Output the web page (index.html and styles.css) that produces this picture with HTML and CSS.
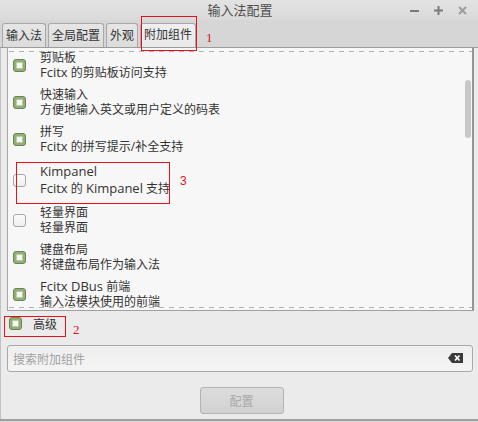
FILE: index.html
```html
<!DOCTYPE html>
<html lang="zh-CN">
<head>
<meta charset="utf-8">
<title>输入法配置</title>
<link rel="stylesheet" href="styles.css">
</head>
<body>
<div class="window">
  <header class="titlebar">
    <span class="title">输入法配置</span>
    <div class="controls">
      <svg class="ctl" width="9" height="9" viewBox="0 0 9 9"><rect x="0" y="4" width="9" height="2" fill="#7a7a7a"/></svg>
      <svg class="ctl" width="9" height="9" viewBox="0 0 9 9"><rect x="0" y="3.5" width="9" height="2" fill="#7a7a7a"/><rect x="3.5" y="0" width="2" height="9" fill="#7a7a7a"/></svg>
      <svg class="ctl" width="9" height="9" viewBox="0 0 9 9"><path d="M1 1 L8 8 M8 1 L1 8" stroke="#9c9c9c" stroke-width="2"/></svg>
    </div>
  </header>

  <nav class="tabs">
    <div class="tab">输入法</div>
    <div class="tab">全局配置</div>
    <div class="tab">外观</div>
    <div class="tab active">附加组件</div>
  </nav>

  <main class="page">
    <div class="list">
      <div class="items">
        <div class="item">
          <span class="cb on"><svg width="13" height="13" viewBox="0 0 13 13"><rect x="0.5" y="0.5" width="12" height="12" rx="2.5" fill="#94ae78" stroke="#6a8454"/><rect x="3.5" y="3.5" width="6" height="6" fill="#dfe8d6"/><path d="M4.3 4.3 L8.7 8.7 M8.7 4.3 L4.3 8.7" stroke="#fff" stroke-width="1.8"/></svg></span>
          <div class="text"><div>剪贴板</div><div><span class="en">Fcitx</span> 的剪贴板访问支持</div></div>
        </div>
        <div class="item">
          <span class="cb on"><svg width="13" height="13" viewBox="0 0 13 13"><rect x="0.5" y="0.5" width="12" height="12" rx="2.5" fill="#94ae78" stroke="#6a8454"/><rect x="3.5" y="3.5" width="6" height="6" fill="#dfe8d6"/><path d="M4.3 4.3 L8.7 8.7 M8.7 4.3 L4.3 8.7" stroke="#fff" stroke-width="1.8"/></svg></span>
          <div class="text"><div>快速输入</div><div>方便地输入英文或用户定义的码表</div></div>
        </div>
        <div class="item">
          <span class="cb on"><svg width="13" height="13" viewBox="0 0 13 13"><rect x="0.5" y="0.5" width="12" height="12" rx="2.5" fill="#94ae78" stroke="#6a8454"/><rect x="3.5" y="3.5" width="6" height="6" fill="#dfe8d6"/><path d="M4.3 4.3 L8.7 8.7 M8.7 4.3 L4.3 8.7" stroke="#fff" stroke-width="1.8"/></svg></span>
          <div class="text"><div>拼写</div><div><span class="en">Fcitx</span> 的拼写提示/补全支持</div></div>
        </div>
        <div class="item tall">
          <span class="cb off"></span>
          <div class="text"><div><span class="en">Kimpanel</span></div><div><span class="en">Fcitx</span> 的 <span class="en">Kimpanel</span> 支持</div></div>
        </div>
        <div class="item">
          <span class="cb off"></span>
          <div class="text"><div>轻量界面</div><div>轻量界面</div></div>
        </div>
        <div class="item">
          <span class="cb on"><svg width="13" height="13" viewBox="0 0 13 13"><rect x="0.5" y="0.5" width="12" height="12" rx="2.5" fill="#94ae78" stroke="#6a8454"/><rect x="3.5" y="3.5" width="6" height="6" fill="#dfe8d6"/><path d="M4.3 4.3 L8.7 8.7 M8.7 4.3 L4.3 8.7" stroke="#fff" stroke-width="1.8"/></svg></span>
          <div class="text"><div>键盘布局</div><div>将键盘布局作为输入法</div></div>
        </div>
        <div class="item">
          <span class="cb on"><svg width="13" height="13" viewBox="0 0 13 13"><rect x="0.5" y="0.5" width="12" height="12" rx="2.5" fill="#94ae78" stroke="#6a8454"/><rect x="3.5" y="3.5" width="6" height="6" fill="#dfe8d6"/><path d="M4.3 4.3 L8.7 8.7 M8.7 4.3 L4.3 8.7" stroke="#fff" stroke-width="1.8"/></svg></span>
          <div class="text"><div><span class="en">Fcitx DBus</span> 前端</div><div>输入法模块使用的前端</div></div>
        </div>
      </div>
      <div class="scrollbar"></div>
    </div>

    <div class="advanced">
      <span class="cb on"><svg width="13" height="13" viewBox="0 0 13 13"><rect x="0.5" y="0.5" width="12" height="12" rx="2.5" fill="#94ae78" stroke="#6a8454"/><rect x="3.5" y="3.5" width="6" height="6" fill="#dfe8d6"/><path d="M4.3 4.3 L8.7 8.7 M8.7 4.3 L4.3 8.7" stroke="#fff" stroke-width="1.8"/></svg></span>
      <span class="adv-label">高级</span>
    </div>

    <div class="search">
      <span class="placeholder">搜索附加组件</span>
      <svg class="clear" width="15" height="10" viewBox="0 0 15 10"><path d="M0 5 L4 0 H15 V10 H4 Z" fill="#3b3b3b"/><path d="M7 2.5 L11.5 7.5 M11.5 2.5 L7 7.5" stroke="#fff" stroke-width="1.7"/></svg>
    </div>

    <div class="actions">
      <button class="btn" type="button">配置</button>
    </div>
  </main>

  <span class="note box-1"></span><span class="num num-1">1</span>
  <span class="note box-2"></span><span class="num num-2">2</span>
  <span class="note box-3"></span><span class="num num-3">3</span>
</div>
</body>
</html>
```
FILE: styles.css
```css
* { box-sizing: border-box; }
html, body { margin: 0; padding: 0; }
body {
  width: 478px;
  height: 422px;
  overflow: hidden;
  font-family: "Open Sans", "Noto Sans CJK SC", sans-serif;
  font-size: 12px;
  color: #333;
  background: #ebebeb;
}
.window {
  position: relative;
  width: 478px;
  height: 422px;
  background: #ebebeb;
  box-shadow: inset 0 -1px 0 #d6d6d6, inset 0 -3px 0 #a0a0a0, inset 1px 0 0 #c2c2c2;
}
.titlebar {
  height: 20px;
  display: flex;
  align-items: center;
  justify-content: center;
  position: relative;
  background: linear-gradient(#e3e3e3, #dadada);
}
.title {
  font-family: "Noto Sans CJK SC", sans-serif;
  font-size: 13px;
  color: #4d4d4d;
  line-height: 20px;
  margin-left: 2px;
}
.controls {
  position: absolute;
  right: 11px;
  top: 6px;
  display: flex;
  gap: 15px;
}
.ctl { display: block; }

.tabs {
  height: 28px;
  display: flex;
  align-items: flex-end;
  gap: 2px;
  padding-left: 2px;
  background: #d6d6d6;
  border-bottom: 1px solid #9c9c9c;
}
.tab {
  height: 24px;
  padding: 0 3px;
  line-height: 22px;
  font-family: "Noto Sans CJK SC", sans-serif;
  font-size: 12px;
  color: #333;
  background: linear-gradient(#e6e6e6, #dcdcdc);
  border: 1px solid #a8a8a8;
  border-bottom: none;
  border-radius: 3px 3px 0 0;
}
.tab.active {
  line-height: 19px;
  background: linear-gradient(#efefef, #e9e9e9);
}

.page {
  padding: 0 4px 0 7px;
}
.list {
  position: relative;
  height: 263px;
  overflow: hidden;
  background: #f7f7f7;
  border-left: 1px solid #a6a6a6;
  border-right: 2px solid #959595;
  border-bottom: 1px solid #a0a0a0;
}
.list::before, .list::after {
  content: "";
  position: absolute;
  left: 1px;
  right: 0;
  height: 1px;
  background: repeating-linear-gradient(to right, #b2b2b2 0 5px, transparent 5px 10px);
}
.list::before { top: 3px; }
.list::after { bottom: 2px; }
.items { margin-top: -2px; }
.item {
  display: flex;
  align-items: center;
  gap: 14px;
  padding: 4px 0 3px 5px;
}
.item .text { line-height: 15px; white-space: nowrap; }
.item.tall { padding: 6px 0 4px 5px; }
.item.tall .text { line-height: 17px; }
.en { font-size: 13px; }

.cb {
  display: block;
  flex: none;
  width: 13px;
  height: 13px;
}
.cb svg { display: block; }
.cb.off {
  border: 1px solid #a8a8a8;
  border-radius: 3px;
  background: linear-gradient(#fbfbfb, #efefef);
}
.scrollbar {
  position: absolute;
  right: 1px;
  top: 32px;
  width: 6px;
  height: 58px;
  border-radius: 3px;
  background: #c7c7c7;
}

.advanced {
  display: flex;
  align-items: center;
  gap: 11px;
  height: 15px;
  margin-top: 5px;
  padding-left: 2px;
}
.adv-label { line-height: 15px; margin-top: 1px; }

.search {
  display: flex;
  align-items: center;
  justify-content: space-between;
  height: 27px;
  margin: 14px 1px 0 0;
  padding: 0 9px 0 5px;
  border: 1px solid #a9a9a9;
  border-radius: 3px;
  background: linear-gradient(#efefef, #f4f4f4);
}
.placeholder { color: #a2a2a2; }
.clear { display: block; margin-top: -2px; }

.actions {
  display: flex;
  justify-content: center;
  margin-top: 15px;
  padding-left: 2px;
}
.btn {
  width: 84px;
  height: 27px;
  font-family: "Noto Sans CJK SC", sans-serif;
  font-size: 12px;
  color: #a8a8a8;
  background: linear-gradient(#dcdcdc, #d2d2d2);
  border: 1px solid #b3b3b3;
  border-radius: 3px;
  padding: 0;
}

.note {
  position: absolute;
  border: 1px solid #e8101a;
}
.box-1 { left: 141px; top: 16px; width: 56px; height: 35px; }
.box-2 { left: 4px; top: 316px; width: 62px; height: 21px; }
.box-3 { left: 16px; top: 162px; width: 154px; height: 42px; }
.num {
  position: absolute;
  color: #e8101a;
  font-size: 12px;
  line-height: 12px;
}
.num-1 { left: 206px; top: 32px; font-family: "Liberation Serif", serif; font-size: 13px; }
.num-2 { left: 73px; top: 324px; font-family: "Liberation Serif", serif; font-size: 13px; }
.num-3 { left: 180px; top: 175px; font-family: "Liberation Sans", sans-serif; }
```
